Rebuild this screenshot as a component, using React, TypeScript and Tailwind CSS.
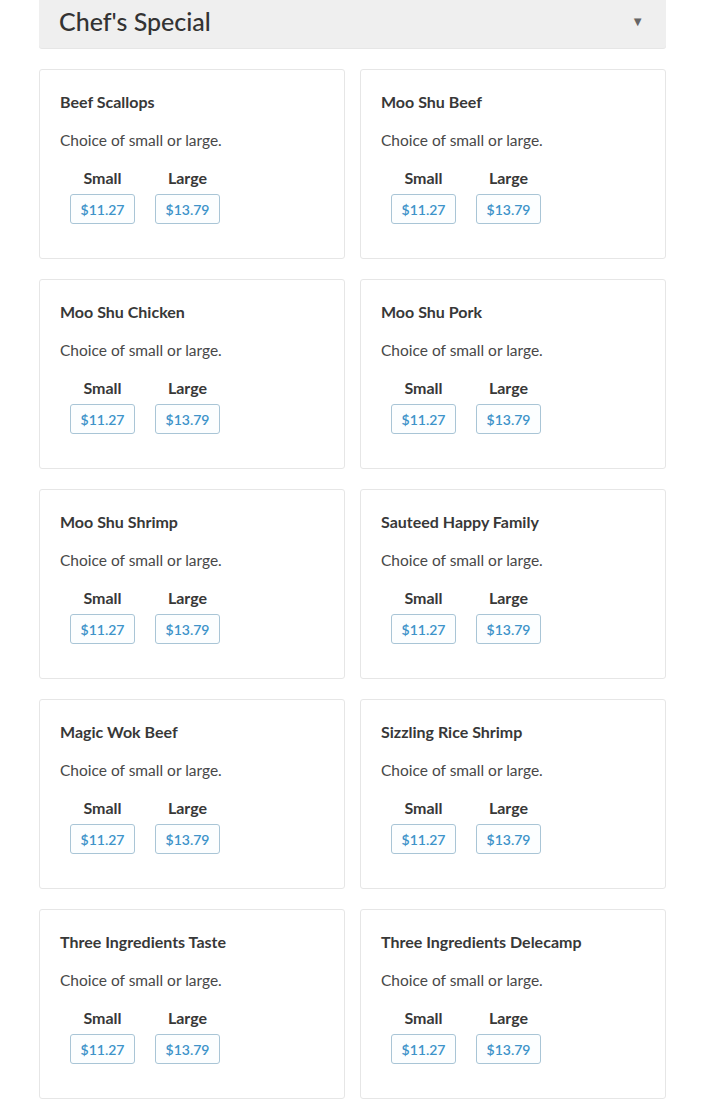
import React from 'react';

interface Dish {
  name: string;
}

const dishes: Dish[] = [
  { name: 'Beef Scallops' },
  { name: 'Moo Shu Beef' },
  { name: 'Moo Shu Chicken' },
  { name: 'Moo Shu Pork' },
  { name: 'Moo Shu Shrimp' },
  { name: 'Sauteed Happy Family' },
  { name: 'Magic Wok Beef' },
  { name: 'Sizzling Rice Shrimp' },
  { name: 'Three Ingredients Taste' },
  { name: 'Three Ingredients Delecamp' },
];

const prices = [
  { label: 'Small', price: '$11.27' },
  { label: 'Large', price: '$13.79' },
];

const DishCard = ({ dish }: { dish: Dish }) => (
  <div className="h-[190px] rounded-[3px] border border-[#e6e6e6] bg-white px-5 pt-[20px]">
    <h3 className="text-[16px] font-bold leading-[24px] text-[#383838]">{dish.name}</h3>
    <p className="mt-[14px] text-[15.5px] leading-[24px] text-[#484848]">Choice of small or large.</p>
    <div className="mt-[14px] flex gap-5 pl-[10px]">
      {prices.map((p) => (
        <div key={p.label} className="flex w-[65px] flex-col items-center">
          <span className="text-[16px] font-bold leading-[24px] text-[#383838]">{p.label}</span>
          <button className="mt-[4px] h-[30px] w-[65px] rounded-[3px] border border-[#a9c5d6] bg-[#fcfeff] text-[14px] font-semibold text-[#3d93c9]">
            {p.price}
          </button>
        </div>
      ))}
    </div>
  </div>
);

export default function App() {
  return (
    <div className="min-h-screen bg-white font-['Lato','Liberation_Sans',sans-serif]">
      <div className="px-[39px]">
        {/* En-tête de la section */}
        <div className="flex h-[48px] items-center justify-between rounded-b-[3px] bg-[#efefef] pl-[20px] pr-[22px] shadow-[0_1px_0_#e6e6e6]">
          <h2 className="text-[25px] font-medium leading-none text-[#333] -mt-[6px]">Chef's Special</h2>
          <span className="text-[13px] text-[#666] -mt-[4px]">▼</span>
        </div>

        {/* Grille des plats */}
        <div className="mt-[21px] grid grid-cols-2 gap-x-[15px] gap-y-[20px]">
          {dishes.map((d) => (
            <DishCard key={d.name} dish={d} />
          ))}
        </div>
      </div>
    </div>
  );
}
